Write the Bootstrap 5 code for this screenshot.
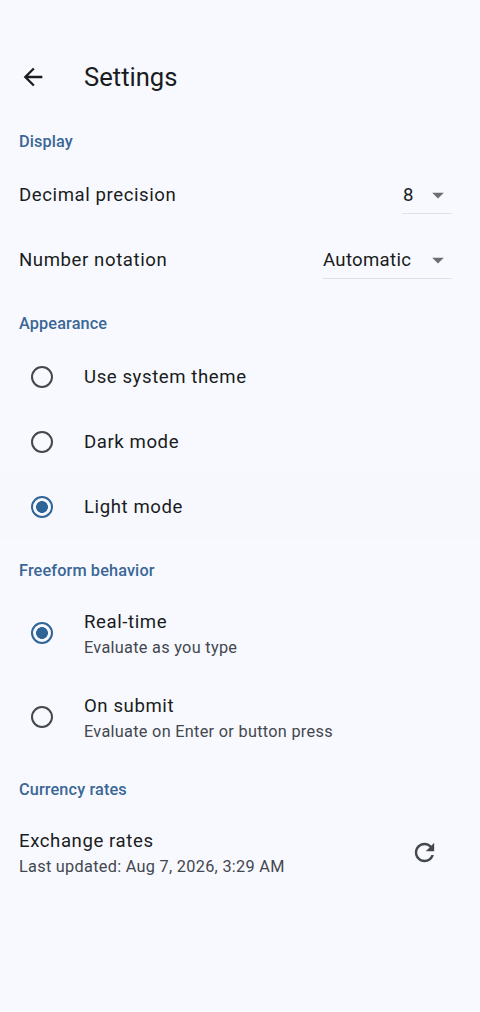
<!DOCTYPE html>
<html lang="en">
<head>
<meta charset="utf-8">
<title>Settings</title>
<link rel="stylesheet" href="https://cdn.jsdelivr.net/npm/bootstrap@5.3.0/dist/css/bootstrap.min.css">
<style>
html, body { height: 100%; }
body { background: #f8f9ff; color: #191c20; font-family: Roboto, "Liberation Sans", sans-serif; }
.page-shell { min-height: 1012px; padding-top: 49px; }
.app-head { height: 56px; padding-left: 19px; }
.app-head h1 { font-size: 25.6px; font-weight: 400; margin: 0 0 0 37px; line-height: 32px; }
.ico { width: 28px; height: 28px; fill: currentColor; flex: none; display: block; }
.sect-label { color: #3a6795; font-size: 16.3px; font-weight: 500; letter-spacing: .12px; line-height: 20px; margin: 0; padding-left: 19px; }
.pt-display { padding-top: 27px; padding-bottom: 10px; }
.pt-appear { padding-top: 22px; padding-bottom: 10px; }
.pt-free { padding-top: 21px; padding-bottom: 10px; }
.pt-curr { padding-top: 21px; padding-bottom: 20px; }
.set-row { height: 65px; padding: 0 28px 0 19px; }
.row-title { font-size: 18.6px; line-height: 28px; letter-spacing: .58px; color: #191c20; }
.row-sub { font-size: 16.3px; line-height: 23px; letter-spacing: .29px; color: #43474e; }
.dd { height: 39px; padding-top: 2px; border-bottom: 1px solid #e0e2ea; font-size: 18.6px; line-height: 28px; letter-spacing: .3px; color: #191c20; }
.dd-sm { width: 50px; padding-left: 1px; }
.dd-lg { width: 129px; }
.dd-arrow { color: #6b6e74; }
.radio-row { height: 65px; padding-left: 31px; }
.radio-row.tall { height: 84px; }
.radio-row.tint { background: #f7f8fe; height: 66px; }
.form-check-input.opt { width: 22px; height: 22px; margin: 0 31px 0 0; flex: none; background-color: transparent; border: 2.3px solid #43474e; background-image: none; box-shadow: none; }
.form-check-input.opt:checked { border-color: #2f6497; background-color: transparent; background-image: radial-gradient(circle, #2f6497 0, #2f6497 5.6px, transparent 6.2px); }
.rate-row { height: 64px; padding: 0 41.5px 0 19px; }
.rate-btn { color: #43474e; width: 29px; height: 29px; }
</style>
</head>
<body>
<main class="page-shell">
  <header class="app-head d-flex align-items-center">
    <svg class="ico" viewBox="0 0 24 24"><path d="M20 11H7.83l5.59-5.59L12 4 4 12l8 8 1.41-1.41L7.83 13H20v-2z"/></svg>
    <h1>Settings</h1>
  </header>

  <h2 class="sect-label pt-display">Display</h2>
  <div class="set-row d-flex align-items-center justify-content-between">
    <span class="row-title">Decimal precision</span>
    <div class="dd dd-sm d-flex align-items-center justify-content-between">
      <span>8</span>
      <svg class="ico dd-arrow" viewBox="0 0 24 24"><path d="M7 10l5 5 5-5z"/></svg>
    </div>
  </div>
  <div class="set-row d-flex align-items-center justify-content-between">
    <span class="row-title">Number notation</span>
    <div class="dd dd-lg d-flex align-items-center justify-content-between">
      <span>Automatic</span>
      <svg class="ico dd-arrow" viewBox="0 0 24 24"><path d="M7 10l5 5 5-5z"/></svg>
    </div>
  </div>

  <h2 class="sect-label pt-appear">Appearance</h2>
  <label class="radio-row d-flex align-items-center">
    <input class="form-check-input opt" type="radio" name="theme">
    <span class="row-title">Use system theme</span>
  </label>
  <label class="radio-row d-flex align-items-center">
    <input class="form-check-input opt" type="radio" name="theme">
    <span class="row-title">Dark mode</span>
  </label>
  <label class="radio-row tint d-flex align-items-center">
    <input class="form-check-input opt" type="radio" name="theme" checked>
    <span class="row-title">Light mode</span>
  </label>

  <h2 class="sect-label pt-free">Freeform behavior</h2>
  <label class="radio-row tall d-flex align-items-center">
    <input class="form-check-input opt" type="radio" name="mode" checked>
    <span class="d-flex flex-column">
      <span class="row-title">Real-time</span>
      <span class="row-sub">Evaluate as you type</span>
    </span>
  </label>
  <label class="radio-row tall d-flex align-items-center">
    <input class="form-check-input opt" type="radio" name="mode">
    <span class="d-flex flex-column">
      <span class="row-title">On submit</span>
      <span class="row-sub">Evaluate on Enter or button press</span>
    </span>
  </label>

  <h2 class="sect-label pt-curr">Currency rates</h2>
  <div class="rate-row d-flex align-items-center justify-content-between">
    <div class="d-flex flex-column">
      <span class="row-title">Exchange rates</span>
      <span class="row-sub">Last updated: Aug 7, 2026, 3:29 AM</span>
    </div>
    <svg class="ico rate-btn" viewBox="0 0 24 24"><path d="M17.65 6.35C16.2 4.9 14.21 4 12 4c-4.42 0-7.99 3.58-7.99 8s3.57 8 7.99 8c3.73 0 6.84-2.55 7.73-6h-2.08c-.82 2.33-3.04 4-5.65 4-3.31 0-6-2.69-6-6s2.69-6 6-6c1.66 0 3.14.69 4.22 1.78L13 11h7V4l-2.35 2.35z"/></svg>
  </div>
</main>
<script src="https://cdn.jsdelivr.net/npm/bootstrap@5.3.0/dist/js/bootstrap.bundle.min.js"></script>
</body>
</html>
